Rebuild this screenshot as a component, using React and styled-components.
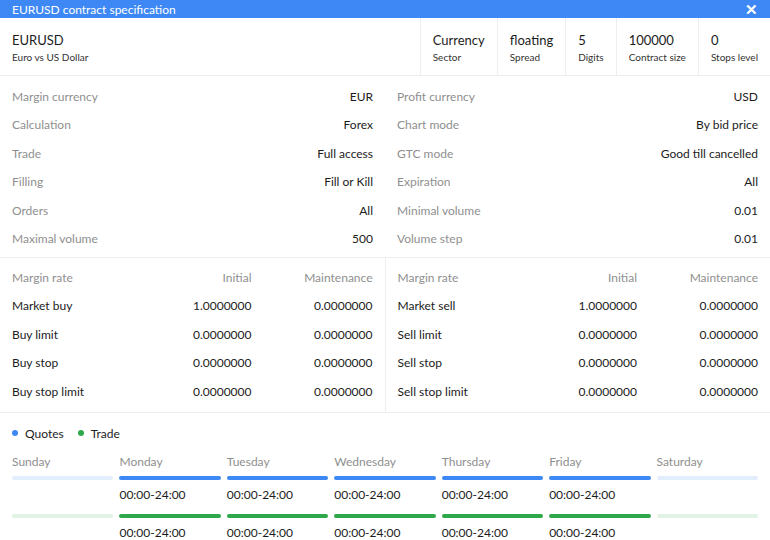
import React from 'react';
import styled, { createGlobalStyle } from 'styled-components';

const GlobalStyle = createGlobalStyle`
  html, body {
    margin: 0;
    padding: 0;
    background: #fff;
    font-family: Lato, "Open Sans", sans-serif;
    color: #222;
  }
`;

const Window = styled.div`
  width: 770px;
  height: 540px;
  overflow: hidden;
  background: #fff;
`;

const TitleBar = styled.div`
  height: 18px;
  background: #3d88f4;
  color: #fff;
  display: flex;
  align-items: center;
  justify-content: space-between;
  padding: 0 12px;
  font-size: 12px;
`;

const Close = styled.span`
  font-size: 15px;
  line-height: 1;
  font-weight: 700;
`;

const Header = styled.div`
  height: 57px;
  display: flex;
  border-bottom: 1px solid #eeeeee;
`;

const Symbol = styled.div`
  flex: 1;
  padding: 2px 12px 0;
  display: flex;
  flex-direction: column;
  justify-content: center;
  gap: 3px;
`;

const Stat = styled.div`
  padding: 2px 12px 0;
  border-left: 1px solid #eeeeee;
  display: flex;
  flex-direction: column;
  justify-content: center;
  gap: 3px;
`;

const Big = styled.div`
  font-size: 13px;
  color: #1c1c1c;
`;

const Small = styled.div`
  font-size: 10px;
  color: #333;
`;

const Props = styled.div`
  display: grid;
  grid-template-columns: 1fr 1fr;
  column-gap: 24px;
  padding: 6px 12px 4px;
  border-bottom: 1px solid #eeeeee;
`;

const PropRow = styled.div`
  height: 28.5px;
  display: flex;
  align-items: center;
  justify-content: space-between;
  font-size: 12px;
`;

const Label = styled.span`
  color: #8f8f8f;
`;

const Value = styled.span`
  color: #1c1c1c;
`;

const Margins = styled.div`
  display: flex;
  border-bottom: 1px solid #eeeeee;
`;

const MarginHalf = styled.div`
  flex: 1;
  padding: 5px 12px 6px;
  border-left: ${(p) => (p.$divider ? '1px solid #eeeeee' : 'none')};
`;

const MarginRow = styled.div`
  height: 28.5px;
  display: grid;
  grid-template-columns: 1fr 110px 121px;
  align-items: center;
  font-size: 12px;
  color: ${(p) => (p.$head ? '#8f8f8f' : '#1c1c1c')};
`;

const Num = styled.span`
  text-align: right;
`;

const Schedule = styled.div`
  padding: 0 12px;
`;

const Legend = styled.div`
  height: 41px;
  display: flex;
  align-items: center;
  gap: 14px;
  font-size: 12px;
`;

const LegendItem = styled.span`
  display: flex;
  align-items: center;
  gap: 7px;
`;

const Dot = styled.span`
  width: 6px;
  height: 6px;
  border-radius: 50%;
  background: ${(p) => p.$color};
`;

const Days = styled.div`
  display: grid;
  grid-template-columns: repeat(7, 1fr);
  column-gap: 6px;
`;

const Day = styled.div`
  display: flex;
  flex-direction: column;
`;

const DayName = styled.div`
  height: 15px;
  line-height: 15px;
  font-size: 12px;
  color: #8f8f8f;
  margin-bottom: 7px;
`;

const Bar = styled.div`
  height: 4px;
  border-radius: 2px;
  background: ${(p) => p.$color};
`;

const Time = styled.div`
  height: 15px;
  font-size: 12px;
  color: #1c1c1c;
  margin: 7px 0 12px;
  line-height: 15px;
`;

const leftProps = [
  ['Margin currency', 'EUR'],
  ['Calculation', 'Forex'],
  ['Trade', 'Full access'],
  ['Filling', 'Fill or Kill'],
  ['Orders', 'All'],
  ['Maximal volume', '500'],
];

const rightProps = [
  ['Profit currency', 'USD'],
  ['Chart mode', 'By bid price'],
  ['GTC mode', 'Good till cancelled'],
  ['Expiration', 'All'],
  ['Minimal volume', '0.01'],
  ['Volume step', '0.01'],
];

const stats = [
  ['Currency', 'Sector'],
  ['floating', 'Spread'],
  ['5', 'Digits'],
  ['100000', 'Contract size'],
  ['0', 'Stops level'],
];

const buyRates = [
  ['Market buy', '1.0000000', '0.0000000'],
  ['Buy limit', '0.0000000', '0.0000000'],
  ['Buy stop', '0.0000000', '0.0000000'],
  ['Buy stop limit', '0.0000000', '0.0000000'],
];

const sellRates = [
  ['Market sell', '1.0000000', '0.0000000'],
  ['Sell limit', '0.0000000', '0.0000000'],
  ['Sell stop', '0.0000000', '0.0000000'],
  ['Sell stop limit', '0.0000000', '0.0000000'],
];

const days = ['Sunday', 'Monday', 'Tuesday', 'Wednesday', 'Thursday', 'Friday', 'Saturday'];

const BLUE = '#3d88f4';
const GREEN = '#2ea84a';

const MarginTable = ({ rows, divider }) => (
  <MarginHalf $divider={divider}>
    <MarginRow $head>
      <span>Margin rate</span>
      <Num>Initial</Num>
      <Num>Maintenance</Num>
    </MarginRow>
    {rows.map(([name, init, maint]) => (
      <MarginRow key={name}>
        <span>{name}</span>
        <Num>{init}</Num>
        <Num>{maint}</Num>
      </MarginRow>
    ))}
  </MarginHalf>
);

export default function App() {
  const propRows = [];
  leftProps.forEach((l, i) => {
    const r = rightProps[i];
    propRows.push(
      <PropRow key={'l' + i}><Label>{l[0]}</Label><Value>{l[1]}</Value></PropRow>,
      <PropRow key={'r' + i}><Label>{r[0]}</Label><Value>{r[1]}</Value></PropRow>
    );
  });

  return (
    <Window>
      <GlobalStyle />
      <TitleBar>
        <span>EURUSD contract specification</span>
        <Close>✕</Close>
      </TitleBar>
      <Header>
        <Symbol>
          <Big>EURUSD</Big>
          <Small>Euro vs US Dollar</Small>
        </Symbol>
        {stats.map(([v, l]) => (
          <Stat key={l}>
            <Big>{v}</Big>
            <Small>{l}</Small>
          </Stat>
        ))}
      </Header>
      <Props>{propRows}</Props>
      <Margins>
        <MarginTable rows={buyRates} />
        <MarginTable rows={sellRates} divider />
      </Margins>
      <Schedule>
        <Legend>
          <LegendItem><Dot $color={BLUE} />Quotes</LegendItem>
          <LegendItem><Dot $color={GREEN} />Trade</LegendItem>
        </Legend>
        <Days>
          {days.map((d, i) => {
            const on = i > 0 && i < 6;
            return (
              <Day key={d}>
                <DayName>{d}</DayName>
                <Bar $color={on ? BLUE : '#e3eefd'} />
                <Time>{on ? '00:00-24:00' : ''}</Time>
                <Bar $color={on ? GREEN : '#e1f3e5'} />
                <Time>{on ? '00:00-24:00' : ''}</Time>
              </Day>
            );
          })}
        </Days>
      </Schedule>
    </Window>
  );
}
